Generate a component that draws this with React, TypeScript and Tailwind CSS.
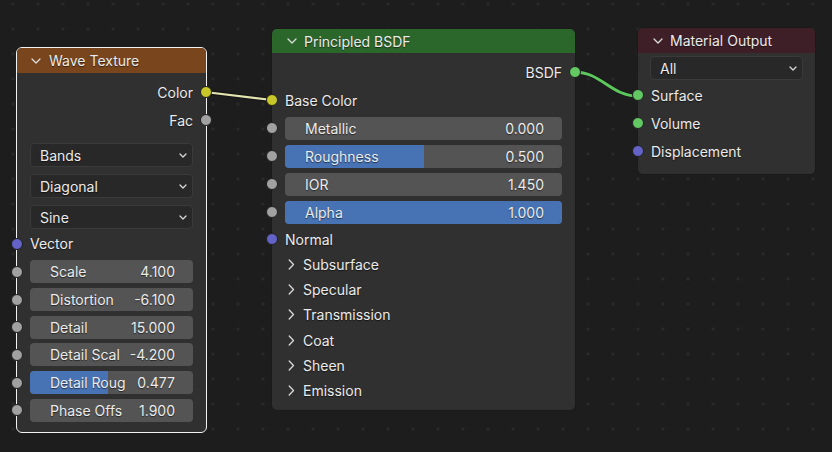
import React from "react";

const socketColors: Record<string, string> = {
  yellow: "bg-[#c7c729]",
  gray: "bg-[#a1a1a1]",
  purple: "bg-[#6363c7]",
  green: "bg-[#63c763]",
};

const Socket = ({ color, side }: { color: string; side: "left" | "right" }) => (
  <span
    className={`absolute top-1/2 h-[12px] w-[12px] -translate-y-1/2 rounded-full border border-[#202020] ${socketColors[color]} ${
      side === "left" ? "-left-[6.5px]" : "-right-[5.5px]"
    }`}
  />
);

const Chevron = () => (
  <svg width="10" height="6" viewBox="0 0 10 6" className="shrink-0">
    <path d="M1 1l4 4 4-4" fill="none" stroke="#dcdcdc" strokeWidth="1.3" strokeLinecap="round" strokeLinejoin="round" />
  </svg>
);

const SmallChevron = () => (
  <svg width="8" height="5" viewBox="0 0 8 5" className="shrink-0">
    <path d="M1 1l3 3 3-3" fill="none" stroke="#d8d8d8" strokeWidth="1.3" strokeLinecap="round" strokeLinejoin="round" />
  </svg>
);

const RightChevron = () => (
  <svg width="7" height="11" viewBox="0 0 7 11" className="shrink-0">
    <path d="M1.2 1l4.3 4.5-4.3 4.5" fill="none" stroke="#d8d8d8" strokeWidth="1.3" strokeLinecap="round" strokeLinejoin="round" />
  </svg>
);

const Row = ({
  label,
  socket,
  side,
  h = "h-[28px]",
}: {
  label: string;
  socket: string;
  side: "left" | "right";
  h?: string;
}) => (
  <div className={`relative flex items-center px-[13px] ${h} ${side === "right" ? "justify-end" : ""}`}>
    <span className="-translate-y-[0.5px]">{label}</span>
    <Socket color={socket} side={side} />
  </div>
);

const Dropdown = ({ label, cls = "" }: { label: string; cls?: string }) => (
  <div
    className={`flex h-[24px] items-center justify-between rounded-[4px] border border-[#3a3a3a] bg-[#282828] pl-[9px] pr-[5px] ${cls}`}
  >
    <span>{label}</span>
    <SmallChevron />
  </div>
);

const Slider = ({
  label,
  value,
  fill = 0,
  socket = "gray",
  h = "h-[28px]",
}: {
  label: string;
  value: string;
  fill?: number;
  socket?: string;
  h?: string;
}) => (
  <div className={`relative flex items-center px-[13px] ${h}`}>
    <div className="relative flex h-[23px] w-full items-center justify-between overflow-hidden rounded-[4px] bg-[#545454] pl-[20px] pr-[18px]">
      {fill > 0 && (
        <div className="absolute inset-y-0 left-0 bg-[#4772b3]" style={{ width: `${fill * 100}%` }} />
      )}
      <span className="relative whitespace-nowrap">{label}</span>
      <span className="relative">{value}</span>
    </div>
    <Socket color={socket} side="left" />
  </div>
);

const PanelRow = ({ label }: { label: string }) => (
  <div className="flex h-[25.2px] items-center gap-[8px] pl-[16px]">
    <RightChevron />
    <span>{label}</span>
  </div>
);

export default function App() {
  return (
    <div
      className="relative h-[452px] w-[832px] overflow-hidden bg-[#1d1d1d] bg-[radial-gradient(circle,#2c2c2c_1px,transparent_1.7px)] bg-size-[25px_25px] bg-position-[0.5px_-8.5px] font-['Inter','Noto_Sans',sans-serif] text-[14px] text-[#ebebeb] [text-shadow:0_1px_1px_rgba(0,0,0,0.55)]"
    >
      {/* links */}
      <svg className="absolute inset-0" width="832" height="452">
        <line x1="205" y1="92" x2="272" y2="100" stroke="#151515" strokeWidth="4.5" />
        <line x1="205" y1="92" x2="272" y2="100" stroke="#e4e4b2" strokeWidth="2.2" />
        <path d="M574 72 C 602 72, 610 96, 638 96" fill="none" stroke="#1a1a1a" strokeWidth="4.5" />
        <path d="M574 72 C 602 72, 610 96, 638 96" fill="none" stroke="#5cc75c" strokeWidth="3" />
      </svg>

      {/* Wave Texture */}
      <div className="absolute left-[16px] top-[47px] flex h-[386px] w-[191px] flex-col rounded-[6px] border border-[#f2f2f2] bg-[#303030]">
        <div className="flex h-[25px] shrink-0 items-center gap-[8px] rounded-t-[5px] bg-[#78451c] pl-[14px]">
          <Chevron />
          <span className="-translate-y-[0.5px]">Wave Texture</span>
        </div>
        <div className="pt-[5px]">
          <Row label="Color" socket="yellow" side="right" />
          <Row label="Fac" socket="gray" side="right" />
          <div className="px-[13px] pt-[9px]">
            <Dropdown label="Bands" />
            <Dropdown label="Diagonal" cls="mt-[7px]" />
            <Dropdown label="Sine" cls="mt-[7px]" />
          </div>
          <Row label="Vector" socket="purple" side="left" h="h-[29px]" />
          <Slider label="Scale" value="4.100" h="h-[27.7px]" />
          <Slider label="Distortion" value="-6.100" h="h-[27.7px]" />
          <Slider label="Detail" value="15.000" h="h-[27.7px]" />
          <Slider label="Detail Scal" value="-4.200" h="h-[27.7px]" />
          <Slider label="Detail Roug" value="0.477" fill={0.477} h="h-[27.7px]" />
          <Slider label="Phase Offs" value="1.900" h="h-[27.7px]" />
        </div>
      </div>

      {/* Principled BSDF */}
      <div className="absolute left-[271px] top-[28px] flex h-[383px] w-[305px] flex-col rounded-[6px] border border-[#1a1a1a] bg-[#303030]">
        <div className="flex h-[24px] shrink-0 items-center gap-[7px] rounded-t-[5px] bg-[#2b662b] pl-[15px]">
          <Chevron />
          <span className="-translate-y-[0.5px]">Principled BSDF</span>
        </div>
        <div className="pt-[5px]">
          <Row label="BSDF" socket="green" side="right" />
          <Row label="Base Color" socket="yellow" side="left" />
          <Slider label="Metallic" value="0.000" />
          <Slider label="Roughness" value="0.500" fill={0.5} />
          <Slider label="IOR" value="1.450" />
          <Slider label="Alpha" value="1.000" fill={1} />
          <Row label="Normal" socket="purple" side="left" h="h-[26px]" />
          <PanelRow label="Subsurface" />
          <PanelRow label="Specular" />
          <PanelRow label="Transmission" />
          <PanelRow label="Coat" />
          <PanelRow label="Sheen" />
          <PanelRow label="Emission" />
        </div>
      </div>

      {/* Material Output */}
      <div className="absolute left-[637px] top-[27px] flex h-[148px] w-[179px] flex-col rounded-[6px] border border-[#1a1a1a] bg-[#303030]">
        <div className="flex h-[25px] shrink-0 items-center gap-[7px] rounded-t-[5px] bg-[#3f1f27] pl-[15px]">
          <Chevron />
          <span className="-translate-y-[0.5px]">Material Output</span>
        </div>
        <div className="px-[12px] pt-[3px]">
          <Dropdown label="All" />
        </div>
        <div className="pt-[1px]">
          <Row label="Surface" socket="green" side="left" />
          <Row label="Volume" socket="green" side="left" />
          <Row label="Displacement" socket="purple" side="left" />
        </div>
      </div>
    </div>
  );
}
